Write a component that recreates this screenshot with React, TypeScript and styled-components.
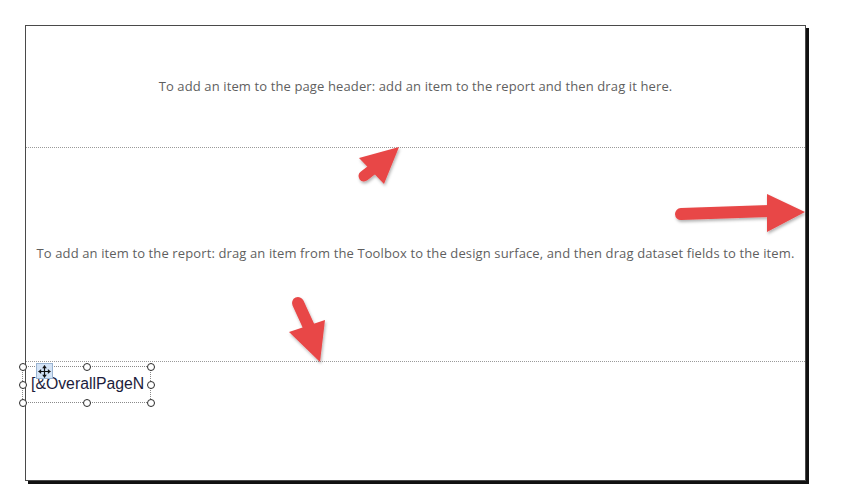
import * as React from "react";
import styled, { createGlobalStyle } from "styled-components";

const Global = createGlobalStyle`
  html, body {
    margin: 0;
    padding: 0;
    background: #ffffff;
  }
`;

const Canvas = styled.div`
  position: relative;
  width: 854px;
  height: 494px;
  padding: 25px 0 0 25px;
  box-sizing: border-box;
  overflow: hidden;
`;

const Page = styled.div`
  width: 781px;
  height: 456px;
  box-sizing: border-box;
  border: 1px solid #4a4a4a;
  box-shadow: 3px 3px 0 #111;
  background: #fff;
  display: flex;
  flex-direction: column;
`;

const Band = styled.div<{ $h?: number; $last?: boolean }>`
  position: relative;
  height: ${(p) => (p.$h ? `${p.$h}px` : "auto")};
  flex: ${(p) => (p.$last ? "1" : "none")};
  border-bottom: ${(p) => (p.$last ? "none" : "1px dotted #9a9a9a")};
  display: flex;
  align-items: center;
  justify-content: center;
  box-sizing: border-box;
`;

const Hint = styled.div<{ $shift?: number }>`
  font-family: "Open Sans", "Noto Sans", sans-serif;
  font-size: 13px;
  letter-spacing: 0.12px;
  color: #5f5f5f;
  white-space: nowrap;
  margin-top: ${(p) => p.$shift ?? 0}px;
`;

const TextboxItem = styled.div`
  position: absolute;
  left: -4px;
  top: 4px;
  width: 129px;
  height: 37px;
  border: 1px dotted #8a8a8a;
  box-sizing: border-box;
`;

const TextboxValue = styled.div`
  position: absolute;
  left: 8px;
  top: 8px;
  font-family: "Liberation Sans", Arial, sans-serif;
  font-size: 15.8px;
  color: #1c1c3c;
  white-space: nowrap;
`;

const MoveGrip = styled.div`
  position: absolute;
  left: 13px;
  top: -4px;
  width: 17px;
  height: 16px;
  background: #d3e3f6;
  border: 1px solid #9ab3d0;
  box-sizing: border-box;
  display: flex;
  align-items: center;
  justify-content: center;
`;

const Handle = styled.span<{ $x: number; $y: number }>`
  position: absolute;
  left: ${(p) => p.$x}px;
  top: ${(p) => p.$y}px;
  width: 8px;
  height: 8px;
  margin: -4.5px 0 0 -4.5px;
  border-radius: 50%;
  border: 1.3px solid #2a2a2a;
  background: #fff;
  box-sizing: border-box;
`;

const Annotations = styled.svg`
  position: absolute;
  left: 0;
  top: 0;
  pointer-events: none;
`;

const handles: [number, number][] = [
  [0, 0],
  [64, 0],
  [128, 0],
  [0, 18],
  [128, 18],
  [0, 36],
  [64, 36],
  [128, 36],
];

const MoveIcon = () => (
  <svg width="13" height="13" viewBox="0 0 12 12">
    <path d="M6 0.5 L6 11.5 M0.5 6 L11.5 6" stroke="#111" strokeWidth="1.1" />
    <path d="M6 0.3 L3.8 2.9 L8.2 2.9 Z M6 11.7 L3.8 9.1 L8.2 9.1 Z M0.3 6 L2.9 3.8 L2.9 8.2 Z M11.7 6 L9.1 3.8 L9.1 8.2 Z" fill="#111" />
  </svg>
);

const RED = "#e84747";

export default function App() {
  return (
    <>
      <Global />
      <Canvas>
        <Page>
          <Band $h={122}>
            <Hint $shift={-1}>
              To add an item to the page header: add an item to the report and then drag it here.
            </Hint>
          </Band>
          <Band $h={214}>
            <Hint $shift={-3}>
              To add an item to the report: drag an item from the Toolbox to the design surface, and then drag dataset fields to the item.
            </Hint>
          </Band>
          <Band $last>
            <TextboxItem>
              <TextboxValue>[&amp;OverallPageN</TextboxValue>
              <MoveGrip>
                <MoveIcon />
              </MoveGrip>
              {handles.map(([x, y], i) => (
                <Handle key={i} $x={x} $y={y} />
              ))}
            </TextboxItem>
          </Band>
        </Page>
        <Annotations width="854" height="494" viewBox="0 0 854 494">
          <defs>
            <filter id="sh" x="-20%" y="-20%" width="140%" height="140%">
              <feDropShadow dx="1" dy="2" stdDeviation="1.5" floodColor="#000" floodOpacity="0.3" />
            </filter>
          </defs>
          <g filter="url(#sh)" fill={RED} stroke={RED}>
            <line x1="364" y1="176" x2="373" y2="169" strokeWidth="11" strokeLinecap="round" />
            <polygon points="399,147 359,158 384,184" stroke="none" />
            <line x1="681" y1="214" x2="770" y2="211" strokeWidth="12" strokeLinecap="round" />
            <polygon points="767,194 805,212 767,232" stroke="none" />
            <line x1="298" y1="303" x2="309" y2="327" strokeWidth="12" strokeLinecap="round" />
            <polygon points="289,332 325,320 320,362" stroke="none" />
          </g>
        </Annotations>
      </Canvas>
    </>
  );
}
